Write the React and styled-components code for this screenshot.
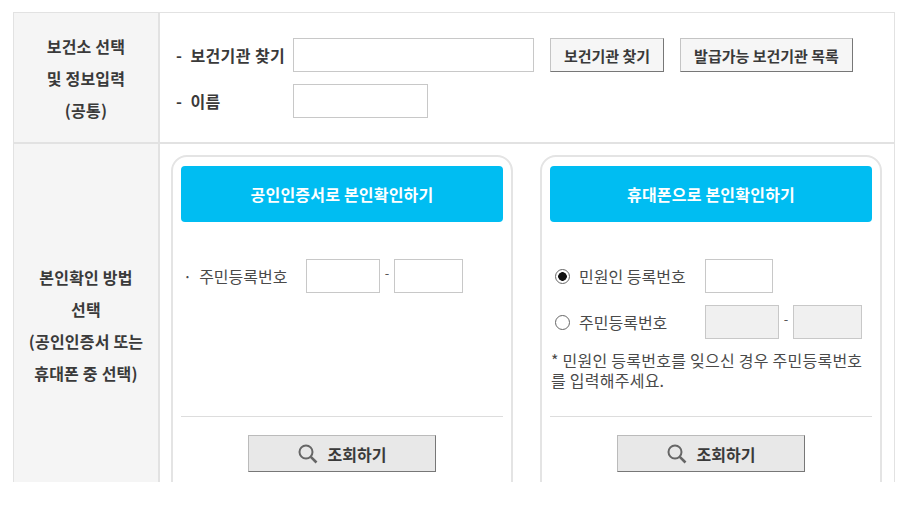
import styled, { createGlobalStyle } from 'styled-components';

const GlobalStyle = createGlobalStyle`
  html, body {
    margin: 0;
    padding: 0;
    background: #fff;
  }
  body {
    font-family: "Noto Sans CJK KR", "Liberation Sans", sans-serif;
    color: #333;
  }
`;

function SearchIcon() {
  return (
    <svg width="20" height="20" viewBox="0 0 20 20" fill="none" stroke="#666" strokeWidth="2">
      <circle cx="8" cy="8" r="6.5" />
      <path d="M12.8 12.8 L18.5 18.5" strokeWidth="2.6" />
    </svg>
  );
}

export default function App() {
  return (
    <Viewport>
      <GlobalStyle />
      <Table>
        <HeadCell>
          <span>보건소 선택</span>
          <span>및 정보입력</span>
          <span>(공통)</span>
        </HeadCell>
        <TopBody>
          <FormRow $mb={12}>
            <BoldLabel>-&nbsp; 보건기관 찾기</BoldLabel>
            <Input $w={241} />
            <SmallButton $ml={16}>보건기관 찾기</SmallButton>
            <SmallButton $ml={16} $w={173}>발급가능 보건기관 목록</SmallButton>
          </FormRow>
          <FormRow>
            <BoldLabel>-&nbsp; 이름</BoldLabel>
            <Input $w={135} />
          </FormRow>
        </TopBody>

        <HeadCell $last>
          <MethodHead>
            <span>본인확인 방법</span>
            <span>선택</span>
            <span>(공인인증서 또는</span>
            <span>휴대폰 중 선택)</span>
          </MethodHead>
        </HeadCell>
        <Cards>
          <Card>
            <BlueHead>공인인증서로 본인확인하기</BlueHead>
            <CertBody>
              <PlainLabel $w={123}>·&nbsp; 주민등록번호</PlainLabel>
              <Input $w={74} />
              <Dash>-</Dash>
              <Input $w={69} />
            </CertBody>
            <CardFooter>
              <SearchButton>
                <SearchIcon />
                조회하기
              </SearchButton>
            </CardFooter>
          </Card>

          <Card>
            <BlueHead>휴대폰으로 본인확인하기</BlueHead>
            <PhoneBody>
              <RadioRow $mb={12}>
                <Radio $on />
                <PlainLabel $w={126}>민원인 등록번호</PlainLabel>
                <Input $w={68} />
              </RadioRow>
              <RadioRow>
                <Radio />
                <PlainLabel $w={126}>주민등록번호</PlainLabel>
                <Input $w={74} $off />
                <Dash>-</Dash>
                <Input $w={69} $off />
              </RadioRow>
              <Note>* 민원인 등록번호를 잊으신 경우 주민등록번호를 입력해주세요.</Note>
            </PhoneBody>
            <CardFooter>
              <SearchButton>
                <SearchIcon />
                조회하기
              </SearchButton>
            </CardFooter>
          </Card>
        </Cards>
      </Table>
    </Viewport>
  );
}

const Viewport = styled.div`
  height: 482px;
  overflow: hidden;
  padding: 12px 10px 0 13px;
  box-sizing: border-box;
`;

const Table = styled.div`
  display: grid;
  grid-template-columns: 146px 1fr;
  grid-template-rows: 131px 360px;
  border: solid #e2e2e2;
  border-width: 1px 1px 0 1px;
`;

const HeadCell = styled.div`
  display: flex;
  flex-direction: column;
  align-items: center;
  justify-content: ${(p) => (p.$last ? 'flex-start' : 'center')};
  background: #f5f5f5;
  border-right: 2px solid #e2e2e2;
  border-bottom: ${(p) => (p.$last ? 'none' : '2px solid #e2e2e2')};
  font-size: 16px;
  font-weight: 700;
  line-height: 32px;
  color: #3a3a3a;
  letter-spacing: 0.2px;
`;

const MethodHead = styled.div`
  display: flex;
  flex-direction: column;
  align-items: center;
  padding-top: 117px;
`;

const TopBody = styled.div`
  border-bottom: 2px solid #e2e2e2;
  padding: 25px 0 0 16px;
`;

const FormRow = styled.div`
  display: flex;
  align-items: center;
  margin-bottom: ${(p) => p.$mb || 0}px;
`;

const BoldLabel = styled.label`
  width: 117px;
  font-size: 16px;
  font-weight: 700;
  letter-spacing: 0.4px;
  color: #3a3a3a;
  white-space: nowrap;
`;

const PlainLabel = styled.label`
  width: ${(p) => p.$w}px;
  font-size: 16px;
  color: #4a4a4a;
  white-space: nowrap;
`;

const Input = styled.div`
  flex: none;
  width: ${(p) => p.$w}px;
  height: 34px;
  box-sizing: border-box;
  border: 1px solid #c8c8c8;
  background: ${(p) => (p.$off ? '#f0f0f0' : '#fff')};
`;

const SmallButton = styled.button`
  width: ${(p) => p.$w || 114}px;
  height: 34px;
  margin-left: ${(p) => p.$ml || 0}px;
  padding: 0;
  font-family: inherit;
  font-size: 15px;
  font-weight: 700;
  color: #3a3a3a;
  background: #f6f6f6;
  border: 1px solid #c4c4c4;
  border-right-color: #777;
  border-bottom-color: #777;
`;

const Cards = styled.div`
  display: flex;
  gap: 27px;
  padding: 11px 0 0 11px;
`;

const Card = styled.div`
  width: 342px;
  height: 360px;
  box-sizing: border-box;
  padding: 9px 8px 0;
  border: 2px solid #e4e4e4;
  border-radius: 16px;
  display: flex;
  flex-direction: column;
`;

const BlueHead = styled.div`
  height: 56px;
  display: flex;
  align-items: center;
  justify-content: center;
  background: #00bdf2;
  border-radius: 4px;
  color: #fff;
  font-size: 16px;
  font-weight: 700;
  letter-spacing: 0.2px;
`;

const CertBody = styled.div`
  height: 194px;
  box-sizing: border-box;
  padding: 37px 0 0 2px;
  display: flex;
  align-items: flex-start;
  line-height: 34px;
`;

const PhoneBody = styled.div`
  height: 194px;
  box-sizing: border-box;
  padding-top: 37px;
`;

const RadioRow = styled.div`
  display: flex;
  align-items: center;
  padding-left: 5px;
  margin-bottom: ${(p) => p.$mb || 0}px;
`;

const Radio = styled.span`
  width: 15px;
  height: 15px;
  box-sizing: border-box;
  margin-right: 9px;
  flex: none;
  border: 1px solid #666;
  border-radius: 50%;
  background: ${(p) => (p.$on ? 'radial-gradient(circle, #111 0 4px, #fff 4.6px)' : '#fff')};
`;

const Dash = styled.span`
  width: 14px;
  text-align: center;
  font-size: 13px;
  line-height: 28px;
  align-self: flex-start;
  color: #555;
`;

const Note = styled.p`
  margin: 11px 0 0;
  padding: 0 8px 0 1px;
  font-size: 16px;
  line-height: 20px;
  letter-spacing: 0.25px;
  color: #4a4a4a;
  word-break: break-all;
`;

const CardFooter = styled.div`
  border-top: 1px solid #ddd;
  padding-top: 18px;
  display: flex;
  justify-content: center;
`;

const SearchButton = styled.button`
  width: 188px;
  height: 37px;
  display: flex;
  align-items: center;
  justify-content: center;
  gap: 10px;
  padding: 0;
  font-family: inherit;
  font-size: 16px;
  font-weight: 700;
  color: #3a3a3a;
  background: #e8e8e8;
  border: 1px solid #bbb;
  border-right-color: #777;
  border-bottom-color: #777;
`;
